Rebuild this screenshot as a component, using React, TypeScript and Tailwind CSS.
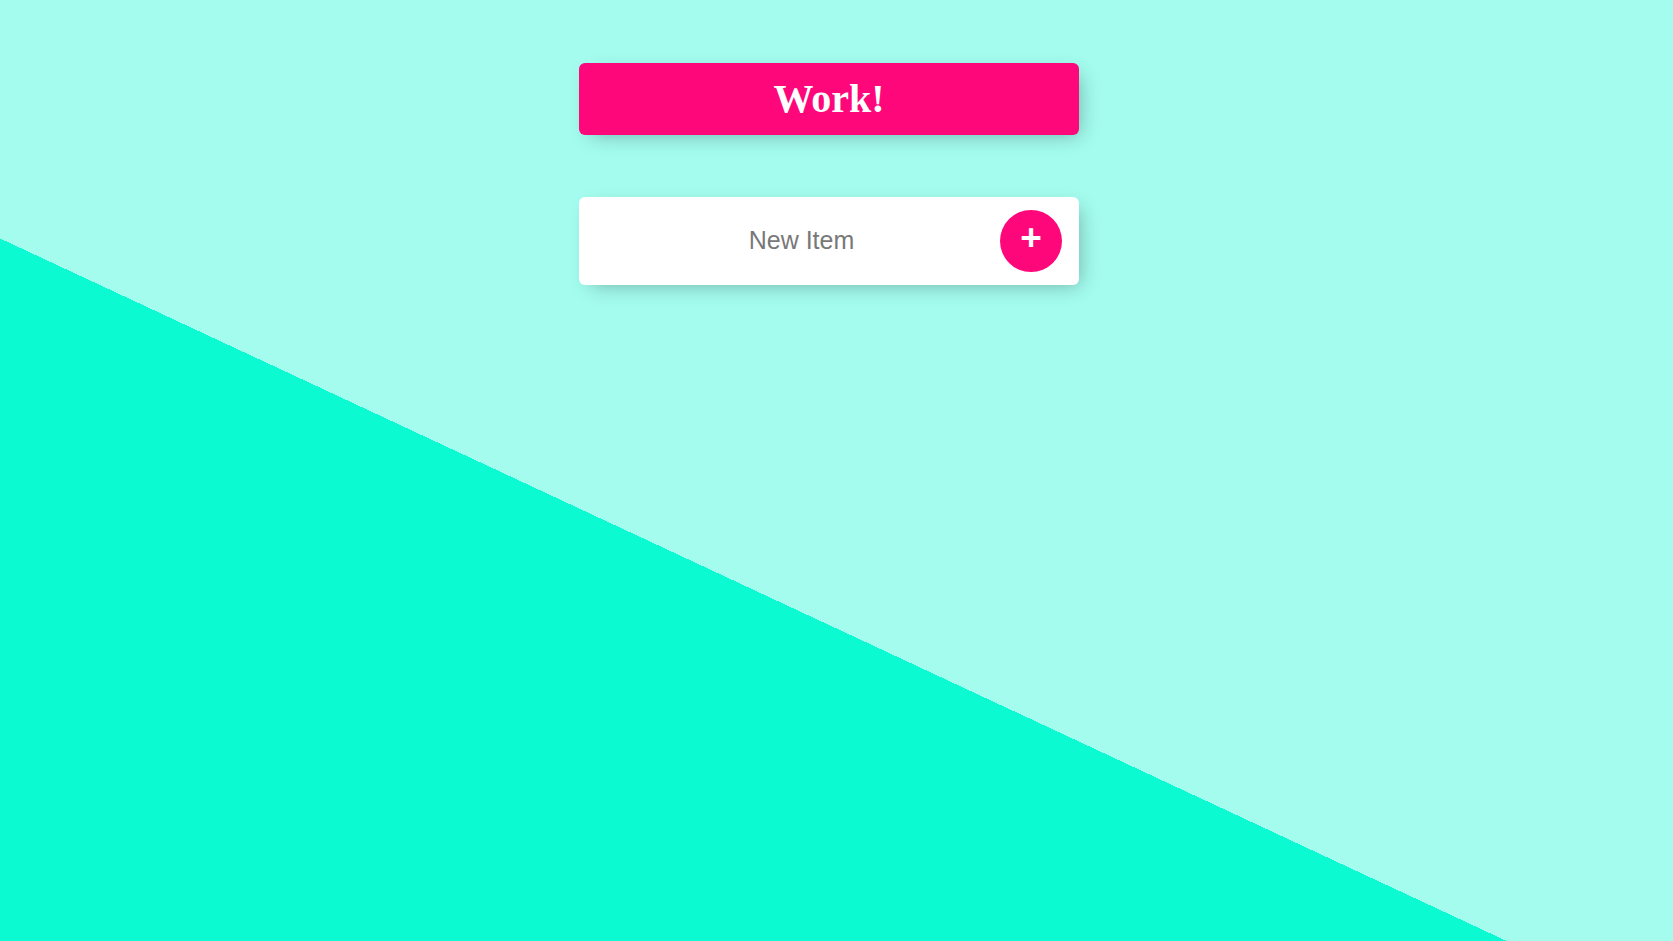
import { useState } from 'react'

export default function App() {
  const [text, setText] = useState('')

  return (
    <div className="h-screen w-full overflow-hidden bg-[#a3fcee] bg-[linear-gradient(25deg,#0cfad2_50%,#a3fcee_50%)] bg-[length:1658px_1250px] bg-no-repeat font-['Liberation_Sans',Arial,sans-serif]">
      <div className="w-[1658px] pt-[63px]">
        {/* heading */}
        <div className="mx-auto w-[500px] rounded-[6px] bg-[#fd077b] shadow-[6px_6px_19px_-6px_rgba(0,0,0,0.3)]">
          <h1 className="px-[12.5px] py-[13px] text-center font-['Liberation_Serif','Times_New_Roman',serif] text-[40px] leading-[46px] font-bold text-white">
            Work!
          </h1>
        </div>

        {/* new item */}
        <div className="mx-auto mt-[62px] w-[500px] rounded-[6px] bg-white shadow-[6px_6px_19px_-6px_rgba(0,0,0,0.3)]">
          <form
            className="ml-[27px] flex h-[88px] items-center gap-[3px]"
            onSubmit={e => e.preventDefault()}
          >
            <input
              type="text"
              value={text}
              onChange={e => setText(e.target.value)}
              placeholder="New Item"
              className="mb-[2px] h-[75px] w-[391px] border-none bg-transparent text-center text-[25px] text-[#333] outline-none placeholder:text-[#787878]"
            />
            <button
              type="submit"
              className="flex h-[62px] w-[62px] shrink-0 items-center justify-center rounded-full bg-[#fd077b] pb-[8px] text-[37px] leading-none font-bold text-white"
            >
              +
            </button>
          </form>
        </div>
      </div>
    </div>
  )
}
